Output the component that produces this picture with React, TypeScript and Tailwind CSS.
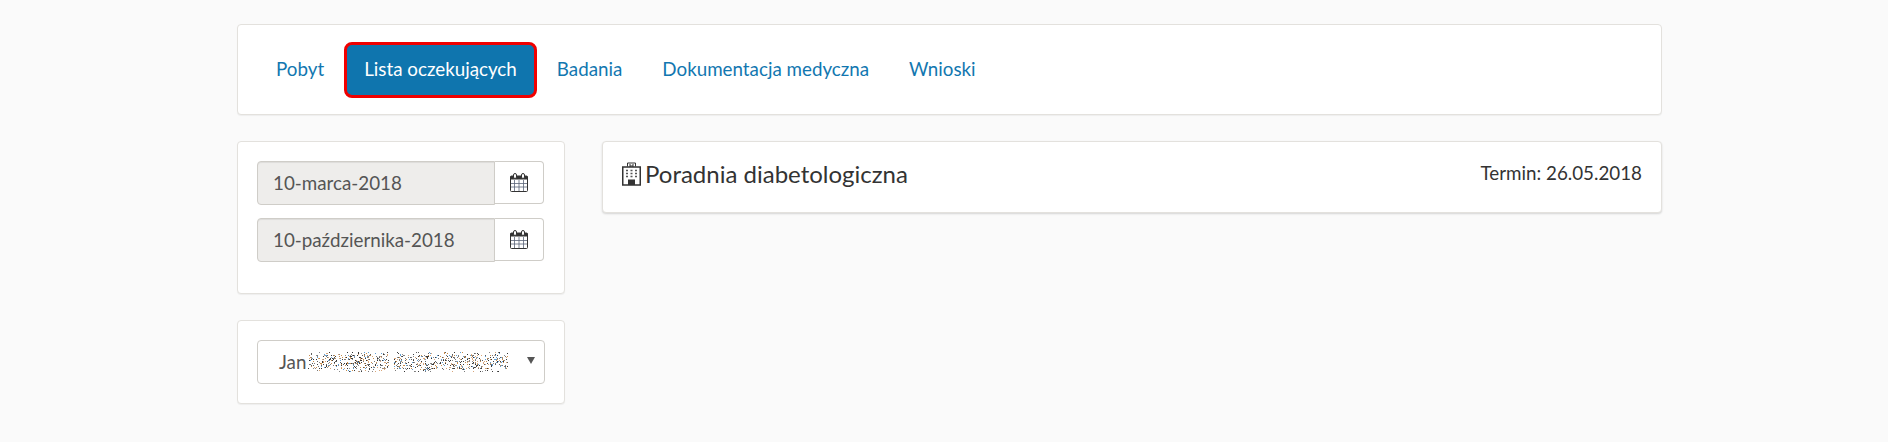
const tabs = ["Pobyt", "Lista oczekujących", "Badania", "Dokumentacja medyczna", "Wnioski"];

// scattered dots standing in for the pixelated surname in the reference
const noiseColors = ["#5f5f5f", "#3f3f3f", "#8a8a8a", "#c98d4a", "#5f9fd6", "#7a7a7a", "#333333", "#d9a679"];
function makeNoise() {
  const dots: { x: number; y: number; c: string }[] = [];
  let seed = 1234;
  const rnd = () => {
    seed = (seed * 16807) % 2147483647;
    return seed / 2147483647;
  };
  for (let i = 0; i < 1500; i++) {
    const x = Math.floor(rnd() * 200);
    const y = Math.floor(rnd() * 20);
    if (x > 80 && x < 86) continue;
    if (rnd() < (y < 3 || y > 16 ? 0.7 : 0.25)) continue;
    dots.push({ x, y, c: noiseColors[Math.floor(rnd() * noiseColors.length)] });
  }
  return dots;
}
const noise = makeNoise();

function CalendarIcon() {
  return (
    <svg width="18" height="19" viewBox="0 0 18 19" fill="none">
      <rect x="0.5" y="3" width="17" height="15.5" rx="1" fill="#fff" stroke="#333" />
      <rect x="0.5" y="3" width="17" height="3.5" fill="#333" />
      <rect x="3.5" y="0.5" width="3" height="5" rx="1.5" fill="#fff" stroke="#333" />
      <rect x="11.5" y="0.5" width="3" height="5" rx="1.5" fill="#fff" stroke="#333" />
      <path d="M4.5 7v11M9 7v11M13.5 7v11M1 10.500h16M1 14h16" stroke="#5b6478" strokeWidth="0.8" />
    </svg>
  );
}

function HospitalIcon() {
  return (
    <svg width="19" height="24" viewBox="0 0 19 24" className="mr-[4px] ml-[1px]">
      <path d="M5.500 4.500V1h8v3.500" fill="#fff" stroke="#333" />
      <path d="M8 2v4M11 2v4M8 4h3" stroke="#333" strokeWidth="1" />
      <rect x="0.75" y="5" width="17.500" height="18" fill="#fff" stroke="#333" strokeWidth="1.500" />
      <path d="M4 8.500h2M8.500 8.500h2M13 8.500h2M4 11.500h2M8.500 11.500h2M13 11.500h2M4 14.500h2M8.500 14.500h2M13 14.500h2" stroke="#555" strokeWidth="1.500" />
      <path d="M6 23v-5.500h7V23z" fill="#333" />
    </svg>
  );
}

function DateField({ value }: { value: string }) {
  return (
    <div className="flex items-start">
      <div className="w-[238px] h-[44px] flex items-center pl-[15px] text-[18.8px] text-[#555] bg-[#eeedeb] border border-[#cfcdc8] rounded-l-[4px] shadow-[inset_0_1px_1px_rgba(0,0,0,0.075)]">
        {value}
      </div>
      <div className="w-[49px] h-[43px] flex items-center justify-center bg-white border border-l-0 border-[#cfcdc8] rounded-r-[4px]">
        <CalendarIcon />
      </div>
    </div>
  );
}

export default function App() {
  return (
    <div className="min-h-[442px] bg-[#fafafa] pt-[24px] pl-[237px] font-['Lato','Open_Sans',sans-serif] text-[#333]">
      <div className="w-[1425px]">
        <div className="h-[91px] bg-white border border-[#e3e1dd] rounded-[4px] flex items-center pl-[18px] shadow-[0_1px_1px_rgba(0,0,0,0.05)]">
          {tabs.map((tab) =>
            tab === "Lista oczekujących" ? (
              <div
                key={tab}
                className="h-[56px] flex items-center px-[17px] text-[18.8px] text-white bg-[#0f75ae] border-[3px] border-[#f00000] rounded-[8px]"
              >
                {tab}
              </div>
            ) : (
              <div key={tab} className="h-[56px] flex items-center px-[20px] text-[18.8px] text-[#1277b0]">
                {tab}
              </div>
            ),
          )}
        </div>

        <div className="flex gap-[37px] mt-[26px]">
          <div className="w-[328px] flex flex-col gap-[26px]">
            <div className="h-[153px] bg-white border border-[#e3e1dd] rounded-[4px] pt-[19px] pl-[19px] flex flex-col gap-[13px] shadow-[0_1px_1px_rgba(0,0,0,0.05)]">
              <DateField value="10-marca-2018" />
              <DateField value="10-października-2018" />
            </div>
            <div className="h-[84px] bg-white border border-[#e3e1dd] rounded-[4px] pt-[19px] pl-[19px] shadow-[0_1px_1px_rgba(0,0,0,0.05)]">
              <div className="relative w-[288px] h-[44px] flex items-center pl-[21px] text-[18.8px] text-[#555] border border-[#cfcdc8] rounded-[4px] bg-white">
                <span>Jan</span>
                <svg width="200" height="20" viewBox="0 0 200 20" className="ml-[2px]">
                  {noise.map((d, i) => (
                    <rect key={i} x={d.x} y={d.y} width="1" height="1" fill={d.c} />
                  ))}
                </svg>
                <span className="absolute right-[9px] top-[16px] w-0 h-0 border-x-[4px] border-x-transparent border-t-[7px] border-t-[#555]" />
              </div>
            </div>
          </div>

          <div className="flex-1 h-[72px] bg-white border border-[#e3e1dd] rounded-[4px] flex items-center justify-between pl-[18px] pr-[19px] pb-[7px] shadow-[0_1px_2px_rgba(0,0,0,0.15)]">
            <div className="flex items-center text-[24px] text-[#333]">
              <HospitalIcon />
              <span>Poradnia diabetologiczna</span>
            </div>
            <div className="text-[18.8px] text-[#333]">Termin: 26.05.2018</div>
          </div>
        </div>
      </div>
    </div>
  );
}
